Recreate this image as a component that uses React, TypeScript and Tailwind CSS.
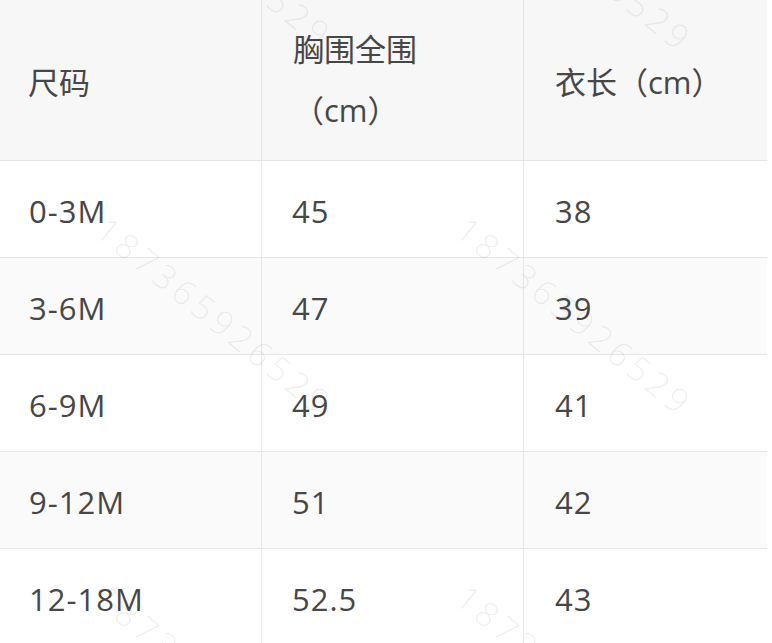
const rows = [
  { size: '0-3M', chest: '45', length: '38', striped: false },
  { size: '3-6M', chest: '47', length: '39', striped: true },
  { size: '6-9M', chest: '49', length: '41', striped: false },
  { size: '9-12M', chest: '51', length: '42', striped: true },
  { size: '12-18M', chest: '52.5', length: '43', striped: false },
];

// watermark positions, written out so tailwind picks them up
const marks = [
  'left-[112px] top-[-157px]',
  'left-[472px] top-[-153px]',
  'left-[112px] top-[211px]',
  'left-[472px] top-[211px]',
  'left-[112px] top-[579px]',
  'left-[472px] top-[579px]',
];

export default function App() {
  return (
    <div className="relative w-[772px] h-[643px] overflow-hidden bg-white font-['Open_Sans','Noto_Sans_CJK_SC',sans-serif] text-[31px] text-[#474747]">
      <div className="w-[767px]">
        {/* Header */}
        <div className="flex h-[161px] bg-[#f7f7f7] border-b border-[#e6e6e6]">
          <div className="w-[262px] flex items-center pl-[28px] pt-[4px] border-r border-[#e6e6e6]">
            尺码
          </div>
          <div className="w-[262px] flex flex-col justify-center pl-[31px] leading-[61px] border-r border-[#e6e6e6]">
            <span>胸围全围</span>
            <span>（cm）</span>
          </div>
          <div className="flex-1 flex items-center pl-[31px] pt-[4px]">
            衣长（cm）
          </div>
        </div>

        {/* Body */}
        {rows.map((row) => (
          <div
            key={row.size}
            className={`flex h-[97px] border-b border-[#e6e6e6] tracking-[1px] ${row.striped ? 'bg-[#fafafa]' : 'bg-white'}`}
          >
            <div className="w-[262px] flex items-center pl-[29px] pt-[4px] border-r border-[#e6e6e6]">
              {row.size}
            </div>
            <div className="w-[262px] flex items-center pl-[30px] pt-[4px] border-r border-[#e6e6e6]">
              {row.chest}
            </div>
            <div className="flex-1 flex items-center pl-[31px] pt-[4px]">
              {row.length}
            </div>
          </div>
        ))}
      </div>

      {/* Watermarks */}
      {marks.map((pos) => (
        <div
          key={pos}
          className={`absolute ${pos} origin-top-left rotate-[39deg] pointer-events-none select-none whitespace-nowrap text-[34px] leading-none tracking-[5px] font-light text-black/[0.07]`}
        >
          187365926529
        </div>
      ))}
    </div>
  );
}
